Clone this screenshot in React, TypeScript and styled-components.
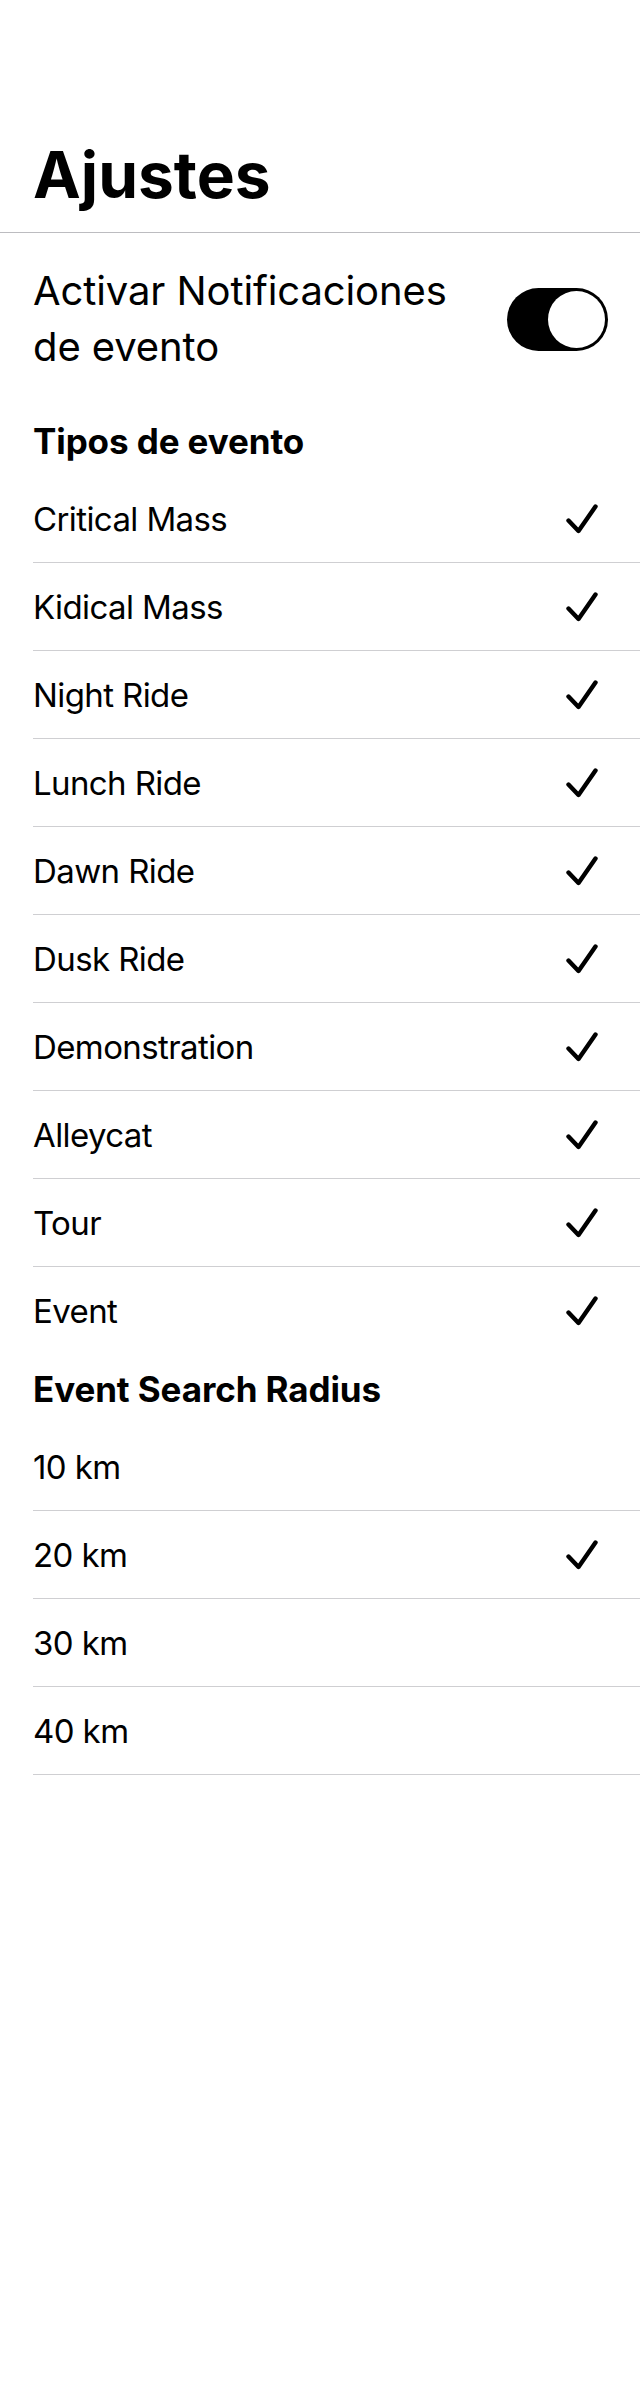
import React from "react";
import styled, { createGlobalStyle } from "styled-components";

const GlobalStyle = createGlobalStyle`
  html, body {
    margin: 0;
    padding: 0;
    background: #ffffff;
  }
  body {
    font-family: Inter, "Noto Sans", "Liberation Sans", sans-serif;
    color: #000000;
    -webkit-font-smoothing: antialiased;
  }
`;

const Screen = styled.div`
  width: 640px;
  min-height: 2400px;
  background: #ffffff;
  display: flex;
  flex-direction: column;
`;

const NavHeader = styled.header`
  padding: 137px 33px 19px;
  border-bottom: 1px solid #bcbcc0;
`;

const LargeTitle = styled.h1`
  margin: 0;
  font-size: 64px;
  line-height: 76px;
  font-weight: 700;
  letter-spacing: 0;
`;

const ToggleRow = styled.div`
  display: flex;
  align-items: center;
  justify-content: space-between;
  padding: 30px 32px 0 33px;
`;

const ToggleLabel = styled.span`
  font-size: 40px;
  line-height: 56px;
  font-weight: 400;
  letter-spacing: -0.1px;
  max-width: 440px;
`;

const Switch = styled.div<{ $on: boolean }>`
  width: 101px;
  height: 63px;
  border-radius: 32px;
  background: ${(p) => (p.$on ? "#000000" : "#e5e5ea")};
  display: flex;
  align-items: center;
  justify-content: ${(p) => (p.$on ? "flex-end" : "flex-start")};
  padding: 3px;
  box-sizing: border-box;
  flex-shrink: 0;
`;

const Knob = styled.div`
  width: 57px;
  height: 57px;
  border-radius: 50%;
  background: #ffffff;
`;

const Section = styled.section<{ $top: number }>`
  margin-top: ${(p) => p.$top}px;
  display: flex;
  flex-direction: column;
`;

const SectionTitle = styled.h2`
  margin: 0 0 13px 33px;
  font-size: 35px;
  line-height: 41px;
  font-weight: 700;
  letter-spacing: -0.1px;
`;

const Row = styled.div<{ $divider: boolean }>`
  margin-left: 33px;
  padding-right: 42px;
  height: 87px;
  display: flex;
  align-items: center;
  justify-content: space-between;
  border-bottom: ${(p) => (p.$divider ? "1px solid #cfcfd2" : "1px solid transparent")};
`;

const RowLabel = styled.span`
  font-size: 33px;
  line-height: 40px;
  font-weight: 400;
  letter-spacing: -0.6px;
`;

const CheckIcon = styled.svg`
  width: 32px;
  height: 30px;
  display: block;
`;

const Check = () => (
  <CheckIcon viewBox="0 0 32 30" fill="none">
    <path
      d="M2.5 16.5 L12.5 27 L29.5 2.5"
      stroke="#000"
      strokeWidth="4.4"
      strokeLinecap="round"
      strokeLinejoin="round"
    />
  </CheckIcon>
);

const eventTypes = [
  "Critical Mass",
  "Kidical Mass",
  "Night Ride",
  "Lunch Ride",
  "Dawn Ride",
  "Dusk Ride",
  "Demonstration",
  "Alleycat",
  "Tour",
  "Event",
];

const radii = [
  { label: "10 km", checked: false },
  { label: "20 km", checked: true },
  { label: "30 km", checked: false },
  { label: "40 km", checked: false },
];

export default function App() {
  return (
    <>
      <GlobalStyle />
      <Screen>
        <NavHeader>
          <LargeTitle>Ajustes</LargeTitle>
        </NavHeader>
        <ToggleRow>
          <ToggleLabel>Activar Notificaciones de evento</ToggleLabel>
          <Switch $on>
            <Knob />
          </Switch>
        </ToggleRow>
        <Section $top={46}>
          <SectionTitle>Tipos de evento</SectionTitle>
          {eventTypes.map((t, i) => (
            <Row key={t} $divider={i < eventTypes.length - 1}>
              <RowLabel>{t}</RowLabel>
              <Check />
            </Row>
          ))}
        </Section>
        <Section $top={14}>
          <SectionTitle>Event Search Radius</SectionTitle>
          {radii.map((r) => (
            <Row key={r.label} $divider>
              <RowLabel>{r.label}</RowLabel>
              {r.checked && <Check />}
            </Row>
          ))}
        </Section>
      </Screen>
    </>
  );
}
